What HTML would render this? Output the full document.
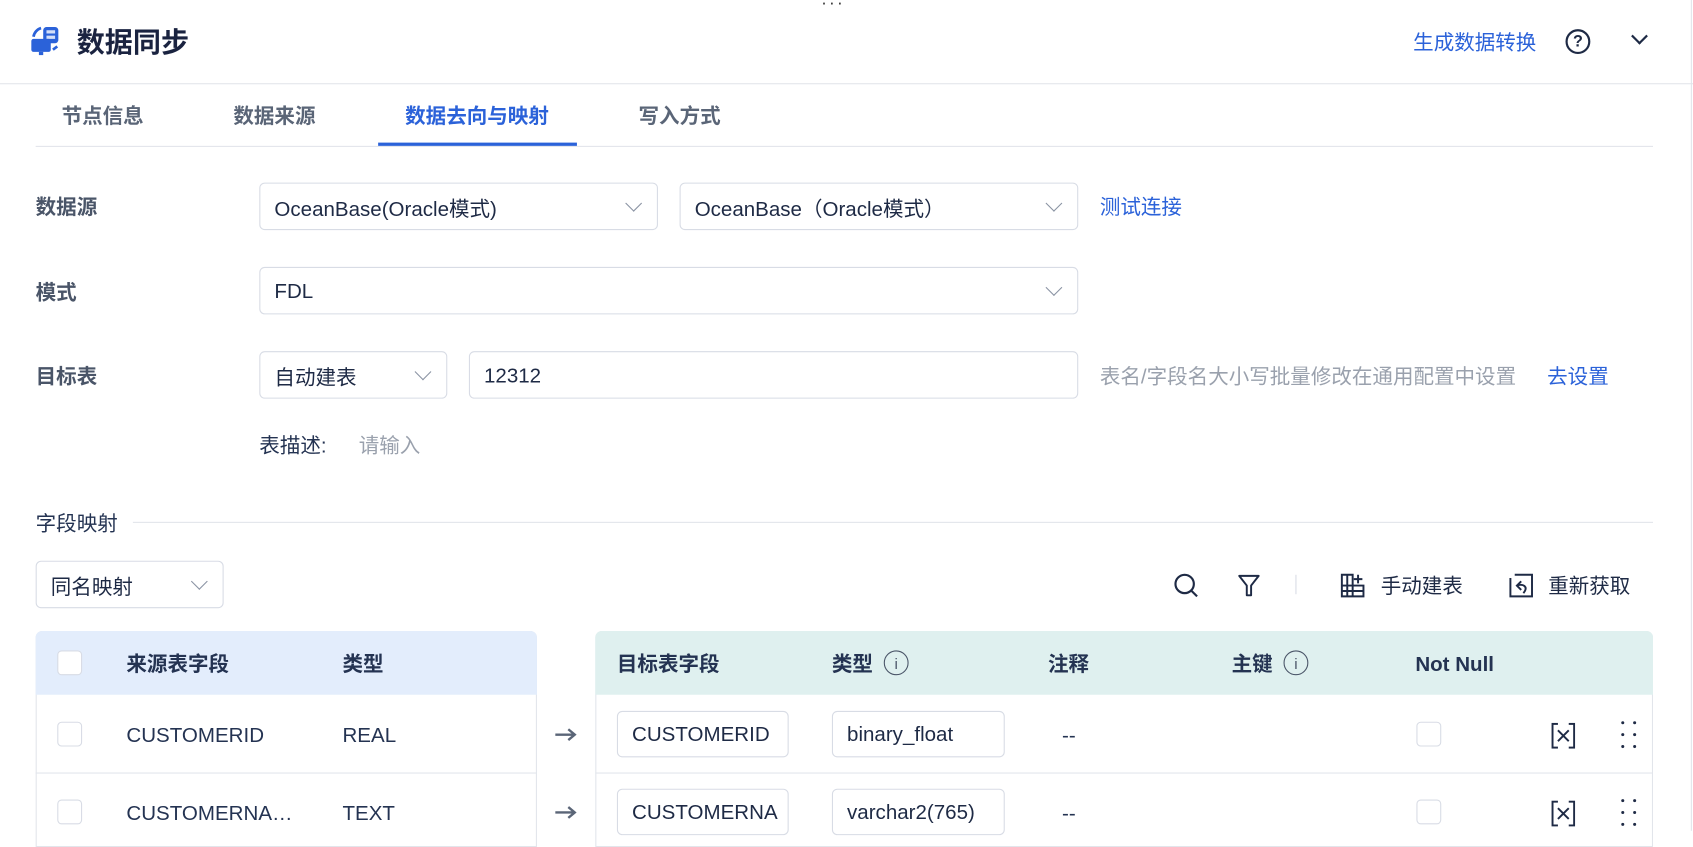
<!DOCTYPE html>
<html><head><meta charset="utf-8"><style>
*{box-sizing:border-box;margin:0;padding:0}
html,body{width:1693px;height:830px;overflow:hidden;background:#fff}
#w{position:absolute;left:0;top:0;width:1567px;height:769px;transform:scale(1.0804);transform-origin:0 0;font-family:"Liberation Sans","Noto Sans CJK SC",sans-serif;color:#1e2a45}
.a{position:absolute;white-space:nowrap;line-height:28px}
.lbl{font-size:19px;font-weight:bold;color:#4a5568}
.box{position:absolute;border:1px solid #d8dce5;border-radius:5px;background:#fff;font-size:19px;color:#1e2a45;padding-left:13px;padding-top:3px;display:flex;align-items:center}
.chev{position:absolute;right:16px;top:50%;width:11px;height:11px;border-right:1.2px solid #8a93a3;border-bottom:1.2px solid #8a93a3;transform:translateY(-75%) rotate(45deg)}
.blue{color:#2b62d9}
.cb{position:absolute;width:23px;height:23px;border:1px solid #d8dce5;border-radius:4px;background:#fff}
.th{font-size:19px;font-weight:bold;color:#243352}
.td{font-size:19px;color:#243352}
.t{margin-top:3px}
.info{display:inline-block;width:23px;height:23px;border:1.5px solid #4a5568;border-radius:50%;vertical-align:-4px;margin-left:10px;position:relative}
.info:after{content:"i";position:absolute;left:0;right:0;top:-3px;text-align:center;font-size:14px;font-weight:normal;color:#4a5568}
</style></head><body><div id="w">
<div class="a" style="left:760px;top:-10px;font-size:16px;color:#333;letter-spacing:2px">···</div>
<svg class="a" style="left:28px;top:24px" width="28" height="28" viewBox="0 0 28 28"><path d="M3 10 A10 10 0 0 1 10 2" stroke="#2b62d9" stroke-width="2.5" fill="none"/><rect x="12" y="1" width="14" height="15" rx="3" fill="#2b62d9"/><rect x="15" y="4" width="8" height="3" fill="#fff" opacity=".8"/><rect x="15" y="9" width="8" height="3" fill="#fff" opacity=".8"/><rect x="1" y="12" width="18" height="12" rx="2" fill="#2b62d9"/><rect x="8" y="24" width="4" height="3" fill="#2b62d9"/><path d="M21 22 L25 19" stroke="#2b62d9" stroke-width="2.5"/></svg>
<div class="a t" style="left:71px;top:22px;font-size:26px;font-weight:bold;color:#1a2340">数据同步</div>
<div class="a blue t" style="left:1308px;top:24px;font-size:19px">生成数据转换</div>
<div class="a" style="left:1449px;top:27px;width:23px;height:23px;border:2px solid #1e2a45;border-radius:50%;text-align:center;font-size:15px;font-weight:bold;line-height:19px">?</div>
<div class="a" style="left:1512px;top:28px;width:11px;height:11px;border-right:2px solid #1e2a45;border-bottom:2px solid #1e2a45;transform:rotate(45deg)"></div>
<div class="a" style="left:0;top:77px;width:1567px;height:1px;background:#e2e5eb"></div>
<div class="a" style="left:33px;top:135px;width:1497px;height:1px;background:#e2e5eb"></div>
<div class="a t" style="left:57px;top:92px;font-size:19px;font-weight:bold;color:#5a6577">节点信息</div>
<div class="a t" style="left:216px;top:92px;font-size:19px;font-weight:bold;color:#5a6577">数据来源</div>
<div class="a t" style="left:375px;top:92px;font-size:19px;font-weight:bold;color:#2b62d9">数据去向与映射</div>
<div class="a t" style="left:591px;top:92px;font-size:19px;font-weight:bold;color:#5a6577">写入方式</div>
<div class="a" style="left:350px;top:132px;width:184px;height:3px;background:#2b62d9"></div>

<div class="a lbl t" style="left:33px;top:176px">数据源</div>
<div class="box" style="left:240px;top:169px;width:369px;height:44px">OceanBase(Oracle模式)<i class="chev"></i></div>
<div class="box" style="left:629px;top:169px;width:369px;height:44px">OceanBase（Oracle模式）<i class="chev"></i></div>
<div class="a blue t" style="left:1018px;top:176px;font-size:19px">测试连接</div>

<div class="a lbl t" style="left:33px;top:255px">模式</div>
<div class="box" style="left:240px;top:247px;width:758px;height:44px">FDL<i class="chev"></i></div>

<div class="a lbl t" style="left:33px;top:333px">目标表</div>
<div class="box" style="left:240px;top:325px;width:174px;height:44px">自动建表<i class="chev"></i></div>
<div class="box" style="left:434px;top:325px;width:564px;height:44px">12312</div>
<div class="a t" style="left:1018px;top:333px;font-size:19px;color:#9aa1ad">表名/字段名大小写批量修改在通用配置中设置</div>
<div class="a blue t" style="left:1432px;top:333px;font-size:19px">去设置</div>
<div class="a t" style="left:240px;top:397px;font-size:19px;color:#243352">表描述:</div>
<div class="a t" style="left:332px;top:397px;font-size:19px;color:#9aa1ad">请输入</div>

<div class="a t" style="left:33px;top:469px;font-size:19px;color:#243352">字段映射</div>
<div class="a" style="left:123px;top:483px;width:1407px;height:1px;background:#e2e5eb"></div>
<div class="box" style="left:33px;top:519px;width:174px;height:44px">同名映射<i class="chev"></i></div>

<svg class="a" style="left:1086px;top:530px" width="24" height="24" viewBox="0 0 24 24"><circle cx="10.5" cy="10.5" r="8.5" stroke="#1e2a45" stroke-width="2" fill="none"/><path d="M17 17 L22 22" stroke="#1e2a45" stroke-width="2"/></svg>
<svg class="a" style="left:1145px;top:531px" width="22" height="22" viewBox="0 0 22 22"><path d="M2 2 H20 L13 11 V20 H9 V11 Z" stroke="#1e2a45" stroke-width="1.8" fill="none" stroke-linejoin="round"/></svg>
<div class="a" style="left:1199px;top:532px;width:1px;height:18px;background:#d8dce5"></div>
<svg class="a" style="left:1240px;top:530px" width="24" height="24" viewBox="0 0 24 24"><path d="M2 2 V22 H22 V12 H12 V2 Z M2 12 H12 M12 12 V22 M7 2 V22 M2 17 H22" stroke="#1e2a45" stroke-width="1.8" fill="none"/><path d="M17 2 V10 M13 6 H21" stroke="#1e2a45" stroke-width="1.8"/></svg>
<div class="a t" style="left:1278px;top:527px;font-size:19px;color:#1e2a45">手动建表</div>
<svg class="a" style="left:1396px;top:530px" width="24" height="24" viewBox="0 0 24 24"><path d="M2 5 V22 H22 V2 H6" stroke="#1e2a45" stroke-width="1.8" fill="none"/><path d="M12 8 L8 12 L12 16 M8 12 C14 10 19 13 14 19" stroke="#1e2a45" stroke-width="1.8" fill="none"/></svg>
<div class="a t" style="left:1433px;top:527px;font-size:19px;color:#1e2a45">重新获取</div>

<!-- left table -->
<div class="a" style="left:33px;top:584px;width:464px;height:200px;border:1px solid #e2e5eb;border-radius:6px 6px 0 0"></div>
<div class="a" style="left:33px;top:584px;width:464px;height:59px;background:#e3edfc;border-radius:6px 6px 0 0"></div>
<div class="cb" style="left:53px;top:602px"></div>
<div class="a th t" style="left:117px;top:599px">来源表字段</div>
<div class="a th t" style="left:317px;top:599px">类型</div>
<div class="cb" style="left:53px;top:668px"></div>
<div class="a td t" style="left:117px;top:665px">CUSTOMERID</div>
<div class="a td t" style="left:317px;top:665px">REAL</div>
<div class="a" style="left:33px;top:715px;width:464px;height:1px;background:#e2e5eb"></div>
<div class="cb" style="left:53px;top:740px"></div>
<div class="a td t" style="left:117px;top:737px">CUSTOMERNA…</div>
<div class="a td t" style="left:317px;top:737px">TEXT</div>
<svg class="a" style="left:513px;top:673px" width="22" height="14" viewBox="0 0 22 14"><path d="M1 7 H19 M13 2 L19 7 L13 12" stroke="#5a6577" stroke-width="2.2" fill="none"/></svg>
<svg class="a" style="left:513px;top:745px" width="22" height="14" viewBox="0 0 22 14"><path d="M1 7 H19 M13 2 L19 7 L13 12" stroke="#5a6577" stroke-width="2.2" fill="none"/></svg>

<!-- right table -->
<div class="a" style="left:551px;top:584px;width:979px;height:200px;border:1px solid #e2e5eb;border-radius:6px 6px 0 0"></div>
<div class="a" style="left:551px;top:584px;width:979px;height:59px;background:#dff0ef;border-radius:6px 6px 0 0"></div>
<div class="a th t" style="left:571px;top:599px">目标表字段</div>
<div class="a th t" style="left:770px;top:599px">类型<span class="info"></span></div>
<div class="a th t" style="left:970px;top:599px">注释</div>
<div class="a th t" style="left:1140px;top:599px">主键<span class="info"></span></div>
<div class="a th t" style="left:1310px;top:599px">Not Null</div>

<div class="box" style="left:571px;top:658px;width:159px;height:43px;overflow:hidden">CUSTOMERID</div>
<div class="box" style="left:770px;top:658px;width:160px;height:43px">binary_float</div>
<div class="a td t" style="left:983px;top:665px">--</div>
<div class="cb" style="left:1311px;top:668px"></div>
<div class="a" style="left:551px;top:715px;width:979px;height:1px;background:#e2e5eb"></div>
<div class="box" style="left:571px;top:730px;width:159px;height:43px;overflow:hidden">CUSTOMERNA</div>
<div class="box" style="left:770px;top:730px;width:160px;height:43px">varchar2(765)</div>
<div class="a td t" style="left:983px;top:737px">--</div>
<div class="cb" style="left:1311px;top:740px"></div>

<svg class="a" style="left:1436px;top:669px" width="22" height="24" viewBox="0 0 22 24"><path d="M6 1 H1 V23 H6 M16 1 H21 V23 H16" stroke="#1e2a45" stroke-width="1.8" fill="none"/><path d="M6 7 L16 17 M16 7 L6 17" stroke="#1e2a45" stroke-width="1.8"/></svg>
<svg class="a" style="left:1436px;top:741px" width="22" height="24" viewBox="0 0 22 24"><path d="M6 1 H1 V23 H6 M16 1 H21 V23 H16" stroke="#1e2a45" stroke-width="1.8" fill="none"/><path d="M6 7 L16 17 M16 7 L6 17" stroke="#1e2a45" stroke-width="1.8"/></svg>
<svg class="a" style="left:1500px;top:667px" width="16" height="26" viewBox="0 0 16 26"><g fill="#1e2a45"><circle cx="2" cy="2" r="1.4"/><circle cx="13" cy="2" r="1.4"/><circle cx="2" cy="13" r="1.4"/><circle cx="13" cy="13" r="1.4"/><circle cx="2" cy="24" r="1.4"/><circle cx="13" cy="24" r="1.4"/></g></svg>
<svg class="a" style="left:1500px;top:739px" width="16" height="26" viewBox="0 0 16 26"><g fill="#1e2a45"><circle cx="2" cy="2" r="1.4"/><circle cx="13" cy="2" r="1.4"/><circle cx="2" cy="13" r="1.4"/><circle cx="13" cy="13" r="1.4"/><circle cx="2" cy="24" r="1.4"/><circle cx="13" cy="24" r="1.4"/></g></svg>
<div class="a" style="left:1565px;top:0;width:1px;height:769px;background:#e2e5eb"></div>
</div></body></html>
